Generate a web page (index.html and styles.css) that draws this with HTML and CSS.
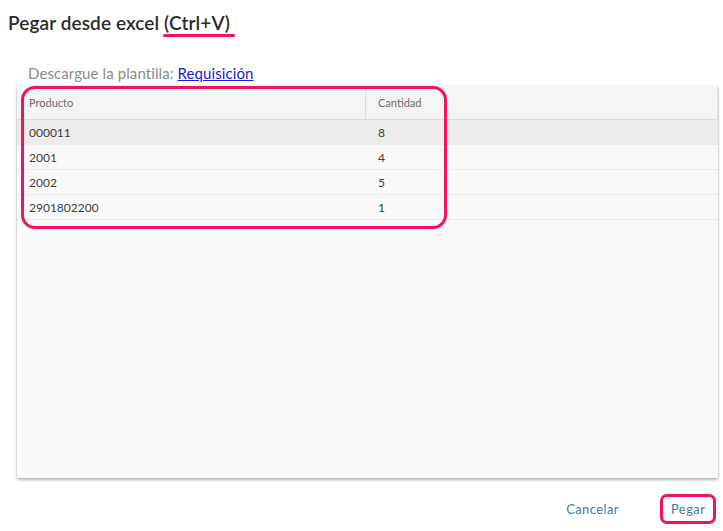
FILE: index.html
```html
<!DOCTYPE html>
<html>
<head>
<meta charset="utf-8">
<link rel="stylesheet" href="styles.css">
</head>
<body>
<div class="dialog">
  <h1 class="title">Pegar desde excel <span class="mark">(Ctrl+V)</span></h1>
  <div class="content">
    <p class="template">Descargue la plantilla: <a href="#" class="link">Requisición</a></p>
    <div class="grid-wrap">
      <div class="grid">
        <div class="row head">
          <div class="cell c1">Producto</div>
          <div class="cell c2">Cantidad</div>
          <div class="cell c3"></div>
        </div>
        <div class="row selected">
          <div class="cell c1">000011</div>
          <div class="cell c2">8</div>
          <div class="cell c3"></div>
        </div>
        <div class="row">
          <div class="cell c1">2001</div>
          <div class="cell c2">4</div>
          <div class="cell c3"></div>
        </div>
        <div class="row">
          <div class="cell c1">2002</div>
          <div class="cell c2">5</div>
          <div class="cell c3"></div>
        </div>
        <div class="row">
          <div class="cell c1">2901802200</div>
          <div class="cell c2">1</div>
          <div class="cell c3"></div>
        </div>
      </div>
      <div class="highlight"></div>
    </div>
  </div>
  <div class="actions">
    <button class="btn">Cancelar</button>
    <button class="btn primary">Pegar</button>
  </div>
</div>
</body>
</html>
```

FILE: styles.css
```css
html, body {
  margin: 0;
  padding: 0;
  background: #ffffff;
}
body {
  font-family: "Lato", "Open Sans", sans-serif;
  width: 723px;
  height: 531px;
  overflow: hidden;
}
.dialog {
  display: flex;
  flex-direction: column;
  height: 531px;
}
.title {
  margin: 0;
  padding: 11px 0 0 8px;
  font-size: 19px;
  font-weight: 600;
  color: #2b2b2b;
  line-height: 24px;
  height: 38px;
  box-sizing: border-box;
  letter-spacing: 0.1px;
}
.mark {
  position: relative;
}
.mark::after {
  content: "";
  position: absolute;
  left: -1px;
  right: -5px;
  bottom: -3px;
  height: 3px;
  border-radius: 2px;
  background: #f0145a;
}
.content {
  padding: 0 5px 0 17px;
}
.template {
  margin: 26px 0 0 11px;
  font-size: 15px;
  line-height: 18px;
  color: #8a8a8a;
  letter-spacing: 0.1px;
}
.link {
  color: #1a1adc;
  text-decoration: underline;
}
.grid-wrap {
  position: relative;
  margin-top: 4px;
}
.grid {
  height: 392px;
  background: #f9f9f9;
  box-shadow: 0 2px 3px rgba(0,0,0,0.28), 0 0 2px rgba(0,0,0,0.12);
}
.row {
  display: flex;
  height: 25px;
  border-bottom: 1px solid #ebebeb;
  box-sizing: border-box;
  background: #f9f9f9;
}
.row.head {
  height: 34px;
  background: #f4f4f4;
  border-bottom: 1px solid #dcdcdc;
}
.row.head .c1 {
  border-right: 1px solid #dedede;
}
.row.head .c3 {
  border-right: 1px solid #e0e0e0;
}
.row.selected {
  background: #ececec;
}
.cell {
  display: flex;
  align-items: center;
  padding-left: 12px;
  font-size: 12px;
  color: #3c3c3c;
  box-sizing: border-box;
}
.row.head .cell {
  font-size: 11px;
  color: #6b6b6b;
}
.c1 { width: 349px; }
.c2 { width: 80px; }
.c3 { flex: 1; padding: 0; }
.highlight {
  position: absolute;
  left: 4px;
  top: 0;
  width: 426px;
  height: 143px;
  border: 3px solid #f0145a;
  border-radius: 14px;
  box-sizing: border-box;
  pointer-events: none;
}
.actions {
  display: flex;
  justify-content: flex-end;
  align-items: center;
  gap: 30px;
  padding: 16px 7px 0 0;
}
.btn {
  font-family: "Lato", "Open Sans", sans-serif;
  font-size: 13px;
  color: #4a76a8;
  background: transparent;
  border: 3px solid transparent;
  border-radius: 7px;
  height: 30px;
  padding: 0 8px;
  letter-spacing: 0.4px;
}
.btn.primary {
  border-color: #f0145a;
  width: 56px;
}
```
